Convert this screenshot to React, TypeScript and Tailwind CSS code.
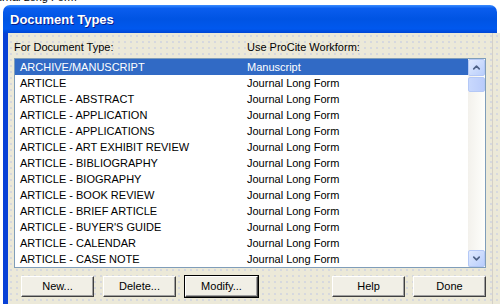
import { ChevronUp, ChevronDown } from 'lucide-react'

const rows: [string, string][] = [
  ['ARCHIVE/MANUSCRIPT', 'Manuscript'],
  ['ARTICLE', 'Journal Long Form'],
  ['ARTICLE - ABSTRACT', 'Journal Long Form'],
  ['ARTICLE - APPLICATION', 'Journal Long Form'],
  ['ARTICLE - APPLICATIONS', 'Journal Long Form'],
  ['ARTICLE - ART EXHIBIT REVIEW', 'Journal Long Form'],
  ['ARTICLE - BIBLIOGRAPHY', 'Journal Long Form'],
  ['ARTICLE - BIOGRAPHY', 'Journal Long Form'],
  ['ARTICLE - BOOK REVIEW', 'Journal Long Form'],
  ['ARTICLE - BRIEF ARTICLE', 'Journal Long Form'],
  ["ARTICLE - BUYER'S GUIDE", 'Journal Long Form'],
  ['ARTICLE - CALENDAR', 'Journal Long Form'],
  ['ARTICLE - CASE NOTE', 'Journal Long Form'],
]

function Button({ label, isDefault = false }: { label: string; isDefault?: boolean }) {
  return (
    <div className={isDefault ? 'border border-black' : 'border border-transparent'}>
      <div className="flex h-[21px] w-[73px] items-center justify-center border border-t-white border-l-white border-b-[#404040] border-r-[#404040] bg-[#F1EFE6] text-[11px] text-black shadow-[inset_-1px_-1px_0_#A0A0A0]">
        {label}
      </div>
    </div>
  )
}

export default function App() {
  return (
    <div className="relative h-[304px] w-[500px] overflow-hidden bg-white font-['Liberation_Sans',Arial,sans-serif]">
      {/* list text behind the dialog, only its lower edge shows */}
      <div className="absolute left-[-4px] top-[-9px] text-[11px] leading-[13px] text-black">urnal Long Form</div>

      <div className="relative pl-[3px] pt-[5px]">
        {/* Title bar */}
        <div className="mr-[3px] flex h-[28px] items-center rounded-tl-[7px] rounded-tr-[7px] bg-[linear-gradient(to_bottom,#3A8CFF_0%,#0A5DEE_12%,#0054E3_50%,#0058EE_85%,#0046D5_100%)] pl-[7px] pt-[1px]">
          <span className="text-[13px] font-bold text-white [text-shadow:1px_1px_0_#0A1E8C]">Document Types</span>
        </div>

        {/* Body */}
        <div className="flex h-[280px] border-l-[5px] border-l-[#0841D6] bg-[#ECE9D8] bg-[radial-gradient(circle,#D6D8DE_0.7px,transparent_0.9px)] bg-[length:6px_6px]">
          <div className="flex flex-col pl-[6px] pt-[7px]">
            <div className="flex h-[14px] items-center text-[11px] text-black">
              <span className="w-[233px]">For Document Type:</span>
              <span>Use ProCite Workform:</span>
            </div>

            {/* List box */}
            <div className="mt-[4px] flex h-[210px] w-[472px] border border-[#7F9DB9] bg-white">
              <div className="flex flex-1 flex-col">
                {rows.map(([type, form], i) => (
                  <div
                    key={type}
                    className={
                      i === 0
                        ? 'flex h-[16px] items-center bg-[#316AC5] pl-[5px] text-[11px] text-white'
                        : 'flex h-[16px] items-center pl-[5px] text-[11px] text-black'
                    }
                  >
                    <span className="w-[227px] whitespace-nowrap">{type}</span>
                    <span className="whitespace-nowrap">{form}</span>
                  </div>
                ))}
              </div>

              {/* Scrollbar */}
              <div className="flex w-[17px] flex-col bg-[linear-gradient(to_right,#F3F1EC,#FEFEFB)]">
                <div className="flex h-[17px] items-center justify-center rounded-[2px] border border-[#B4C8F6] bg-[linear-gradient(to_bottom_right,#E0EAFE,#B9CEFC)]">
                  <ChevronUp className="h-[11px] w-[11px] text-[#4D6185]" strokeWidth={3.5} />
                </div>
                <div className="mt-[1px] h-[15px] rounded-[2px] border border-[#B4C8F6] bg-[linear-gradient(to_right,#C8D8FD,#BACCFB)]" />
                <div className="flex-1" />
                <div className="flex h-[17px] items-center justify-center rounded-[2px] border border-[#B4C8F6] bg-[linear-gradient(to_bottom_right,#E0EAFE,#B9CEFC)]">
                  <ChevronDown className="h-[11px] w-[11px] text-[#4D6185]" strokeWidth={3.5} />
                </div>
              </div>
            </div>

            {/* Buttons */}
            <div className="mt-[7px] flex w-[473px] items-start pl-[6px]">
              <div className="flex gap-[7px]">
                <Button label="New..." />
                <Button label="Delete..." />
                <Button label="Modify..." isDefault />
              </div>
              <div className="ml-auto flex gap-[6px]">
                <Button label="Help" />
                <Button label="Done" />
              </div>
            </div>
          </div>
          <div className="ml-[5px] w-[1px] bg-[#D4D0C8]" />
          <div className="flex-1" />
        </div>
      </div>
    </div>
  )
}
